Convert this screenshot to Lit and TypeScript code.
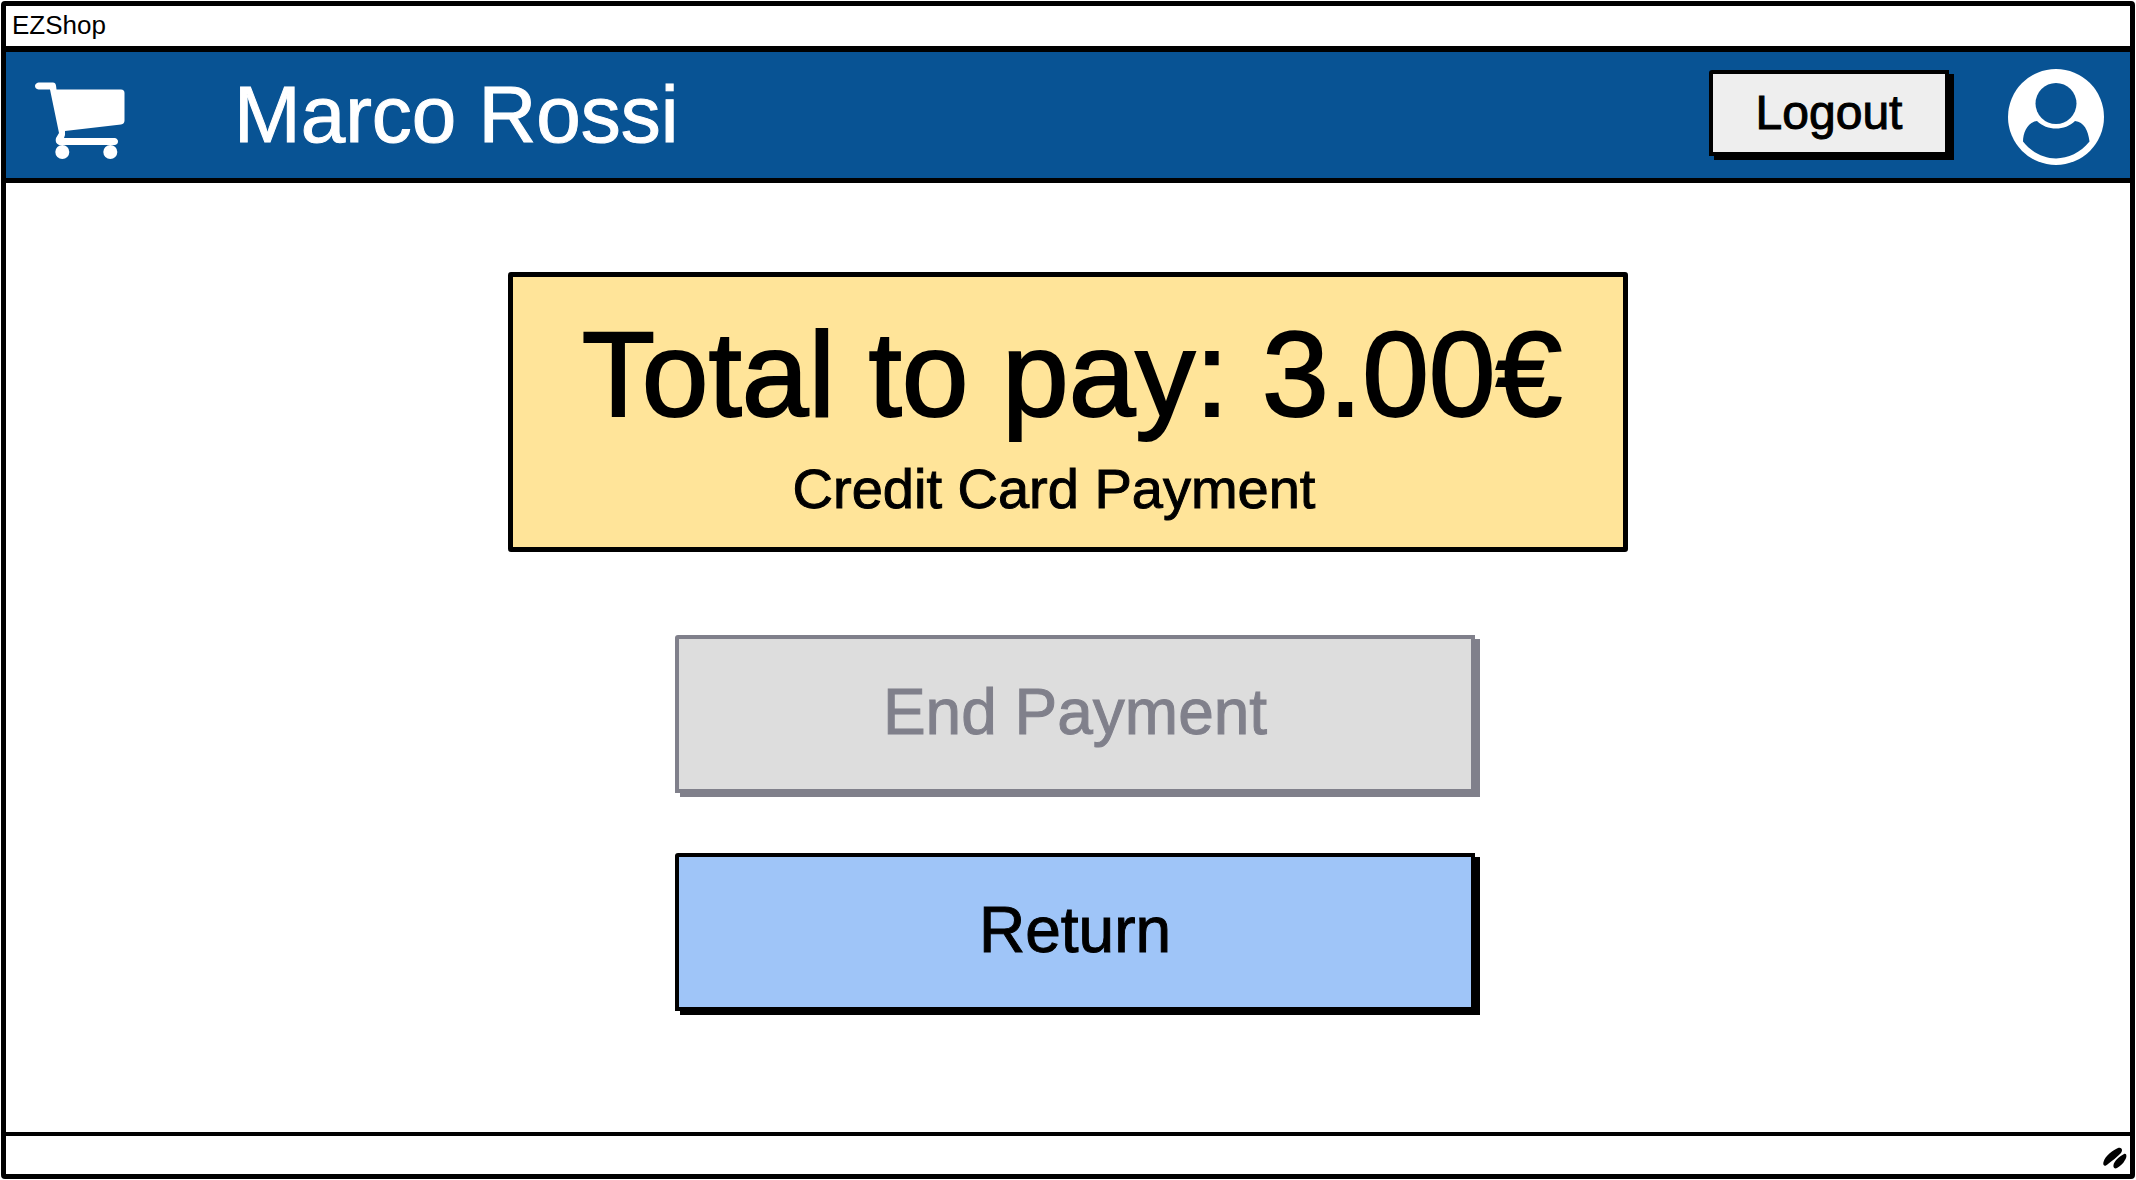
import { LitElement, html, css } from "lit";
import { customElement, property } from "lit/decorators.js";

@customElement("sketch-button")
class SketchButton extends LitElement {
  @property({ type: String }) label = "";
  @property({ type: String }) tone = "light";
  @property({ type: Boolean }) disabled = false;

  static styles = css`
    :host {
      display: block;
    }
    .button {
      display: block;
      box-sizing: border-box;
      width: 100%;
      margin: 0;
      padding: 36px 44px 40px;
      border: 4px solid #000;
      border-radius: 3px 0 0 0;
      box-shadow: 5px 4px 0 #000;
      color: #000;
      font: 64px/74px "Liberation Sans", Arial, sans-serif;
      -webkit-text-stroke: 1px currentColor;
      text-align: center;
      cursor: pointer;
    }
    .light {
      padding: 12px 40px;
      background: #eee;
      font-size: 48px;
      line-height: 54px;
    }
    .primary {
      background: #9fc5f8;
    }
    .muted {
      background: #ddd;
    }
    .button:disabled {
      border-color: #80808b;
      box-shadow: 5px 4px 0 #80808b;
      color: #80808b;
      cursor: default;
    }
  `;

  render() {
    return html`<button class="button ${this.tone}" type="button" ?disabled=${this.disabled}>${this.label}</button>`;
  }
}

@customElement("app-root")
class AppRoot extends LitElement {
  static styles = css`
    :host {
      display: block;
      font-family: "Liberation Sans", Arial, sans-serif;
      color: #000;
      background: #fff;
    }
    .window {
      display: flex;
      flex-direction: column;
      box-sizing: border-box;
      min-height: 100vh;
      padding: 1px;
    }
    .frame {
      display: flex;
      flex-direction: column;
      flex: 1;
      border: 5px solid #000;
      border-radius: 4px;
    }
    .title-bar {
      padding: 3px 6px 5px;
      border-bottom: 6px solid #000;
      font-size: 26px;
      line-height: 32px;
    }
    .header {
      display: flex;
      align-items: center;
      padding: 17px 26px 13px 28px;
      border-bottom: 5px solid #000;
      background: #085394;
      color: #fff;
    }
    .cart {
      flex: none;
      width: 92px;
      height: 84px;
    }
    .user {
      flex: 1;
      margin: 0 0 4px 108px;
      font-size: 80px;
      font-weight: 400;
      line-height: 92px;
      -webkit-text-stroke: 1px currentColor;
    }
    .logout {
      width: 240px;
      margin: 0 59px 8px 0;
    }
    .avatar {
      flex: none;
      width: 96px;
      height: 96px;
    }
    .content {
      display: flex;
      flex: 1;
      flex-direction: column;
      align-items: center;
      gap: 83px;
      padding: 89px 40px;
    }
    .summary {
      box-sizing: border-box;
      width: 100%;
      max-width: 1120px;
      padding: 28px 40px 22px;
      border: 5px solid #000;
      border-radius: 3px;
      background: #ffe499;
      text-align: center;
    }
    .total {
      margin: 0;
      padding-left: 8px;
      font-size: 120px;
      font-weight: 400;
      line-height: 138px;
      -webkit-text-stroke: 2px currentColor;
    }
    .method {
      margin: 10px 0 0;
      padding-right: 28px;
      font-size: 56px;
      line-height: 72px;
      -webkit-text-stroke: 1px currentColor;
    }
    .actions {
      display: grid;
      gap: 60px;
      box-sizing: border-box;
      width: 100%;
      max-width: 814px;
      padding-left: 14px;
    }
    .status-bar {
      display: flex;
      align-items: center;
      justify-content: flex-end;
      padding: 11px 3px 5px;
      border-top: 4px solid #000;
    }
    .grip {
      display: block;
      width: 24px;
      height: 22px;
    }
  `;

  render() {
    return html`
      <div class="window">
        <div class="frame">
          <div class="title-bar">EZShop</div>
          <header class="header">
            <svg class="cart" viewBox="0 0 92 84" fill="#fff" role="img" aria-label="Shopping cart">
              <path d="M4.500 7.500H19Q21.500 7.500 22 10.500L22.500 14.500H87Q90.500 14.500 90.500 18V45.500Q90.500 49 87 49.500L31 56V60L30 63H81Q84 64 84 66.500T81 70H25Q20.500 68 22 63L25 58L16 14.500H4.500Q1 13.500 1 11T4.500 7.500Z" />
              <circle cx="28.300" cy="77" r="7" />
              <circle cx="76.300" cy="77" r="7" />
            </svg>
            <h2 class="user">Marco Rossi</h2>
            <sketch-button class="logout" label="Logout"></sketch-button>
            <svg class="avatar" viewBox="0 0 96 96" role="img" aria-label="Account">
              <circle cx="48" cy="48" r="48" fill="#fff" />
              <circle cx="48" cy="34.500" r="20.500" fill="#085394" />
              <path d="M29 52C20 53 15 63 15 72.500C33 95 63 95 81.500 72.500C80 61 76 53 67 52C57 62 39 62 29 52Z" fill="#085394" />
            </svg>
          </header>
          <main class="content">
            <section class="summary">
              <h1 class="total">Total to pay: 3.00€</h1>
              <p class="method">Credit Card Payment</p>
            </section>
            <div class="actions">
              <sketch-button label="End Payment" tone="muted" disabled></sketch-button>
              <sketch-button label="Return" tone="primary"></sketch-button>
            </div>
          </main>
          <footer class="status-bar">
            <svg class="grip" viewBox="0 0 24 22" aria-hidden="true">
              <path d="M0.500 15C2 9 10 3 15 1C19 0 20 3 18 6C14 10 9 14 5 17C2 20 -0.500 19 0.500 15ZM10.500 18C11 14 17 9 21 7C24 6 24 10 22 13C20 17 17 19 14 21C12 22 10 21 10.500 18Z" />
            </svg>
          </footer>
        </div>
      </div>
    `;
  }
}
